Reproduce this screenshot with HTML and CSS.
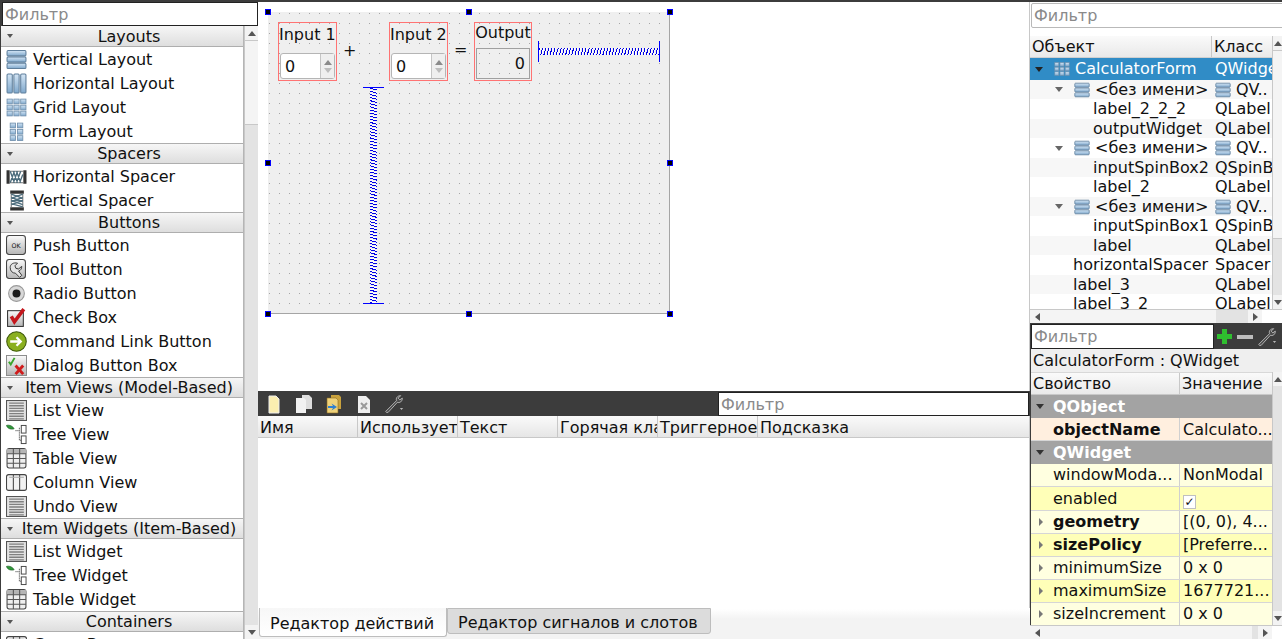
FILE: index.html
```html
<!DOCTYPE html>
<html lang="ru">
<head>
<meta charset="utf-8">
<title>Qt Designer</title>
<link rel="stylesheet" href="styles.css">
</head>
<body>
<svg class="defs" width="0" height="0">
  <defs>
    <linearGradient id="bl" x1="0" y1="0" x2="0" y2="1"><stop offset="0" stop-color="#d5e6f5"/><stop offset="1" stop-color="#7fa8cc"/></linearGradient>
    <linearGradient id="gr" x1="0" y1="0" x2="0" y2="1"><stop offset="0" stop-color="#fafafa"/><stop offset="1" stop-color="#b5b5b5"/></linearGradient>
    <symbol id="i-v" viewBox="0 0 20 20"><g fill="url(#bl)" stroke="#5f7f9c"><rect x="1" y="1.500" width="18" height="5" rx="1"/><rect x="1" y="7.500" width="18" height="5" rx="1"/><rect x="1" y="13.500" width="18" height="5" rx="1"/></g></symbol>
    <symbol id="i-h" viewBox="0 0 20 20"><g fill="url(#bl)" stroke="#5f7f9c"><rect x="1" y="1" width="5" height="18" rx="1"/><rect x="7.500" y="1" width="5" height="18" rx="1"/><rect x="14" y="1" width="5" height="18" rx="1"/></g></symbol>
    <symbol id="i-g" viewBox="0 0 20 20"><g fill="url(#bl)" stroke="#6f8fac" stroke-width=".8"><rect x="1" y="2" width="5" height="4.500"/><rect x="7.500" y="2" width="5" height="4.500"/><rect x="14" y="2" width="5" height="4.500"/><rect x="1" y="7.800" width="5" height="4.500"/><rect x="7.500" y="7.800" width="5" height="4.500"/><rect x="14" y="7.800" width="5" height="4.500"/><rect x="1" y="13.500" width="5" height="4.500"/><rect x="7.500" y="13.500" width="5" height="4.500"/><rect x="14" y="13.500" width="5" height="4.500"/></g></symbol>
    <symbol id="i-f" viewBox="0 0 20 20"><g fill="url(#bl)" stroke="#6f8fac" stroke-width=".8"><rect x="4" y="2" width="5" height="4.500"/><rect x="11" y="2" width="5" height="4.500"/><rect x="4" y="8" width="5" height="4.500"/><rect x="11" y="8" width="5" height="4.500"/><rect x="4" y="14" width="5" height="4.500"/><rect x="11" y="14" width="5" height="4.500"/></g></symbol>
    <symbol id="i-hs" viewBox="0 0 20 20"><path d="M0.500 4h3v13h-3zM16.500 4h3v13h-3z" fill="#333"/><path d="M3.500 5h13M3.500 16h13" stroke="#777"/><path d="M4 16L8 5M7 16l4-11M10 16l4-11M13 16l3-8M4 5l4 11M7 5l4 11M10 5l4 11" stroke="#4d6d7d" stroke-width="1.300" fill="none"/></symbol>
    <symbol id="i-vs" viewBox="0 0 20 20"><path d="M4 0.500h13v3H4zM4 16.500h13v3H4z" fill="#333"/><path d="M5 3.500v13M16 3.500v13" stroke="#777"/><path d="M5 4l11 4M5 7l11 4M5 10l11 4M5 13l11 3M16 4L5 8M16 7L5 11M16 10L5 14" stroke="#4d6d7d" stroke-width="1.300" fill="none"/></symbol>
    <symbol id="i-ok" viewBox="0 0 20 20"><rect x="0.500" y="0.500" width="18" height="18" rx="2.500" fill="url(#gr)" stroke="#444"/><text x="9.500" y="12.500" class="oktext" text-anchor="middle">OK</text></symbol>
    <symbol id="i-tb" viewBox="0 0 20 20"><rect x="0.500" y="0.500" width="18" height="18" rx="2.500" fill="url(#gr)" stroke="#444"/><path d="M4 8c0-3 3-5 7-4L8.500 6.500l1 2.500 2.500.5L15 7c0 2-1 4-3 4.500l3 4-2 2-4-4c-3 0-5-2-5-5.500z" fill="#e4e4e4" stroke="#333" stroke-width=".9"/></symbol>
    <symbol id="i-r" viewBox="0 0 20 20"><circle cx="10" cy="10" r="7.500" fill="#d8d8d8" stroke="#999"/><circle cx="10" cy="10" r="3.800" fill="#1c1c1c"/></symbol>
    <symbol id="i-c" viewBox="0 0 20 20"><rect x="1.500" y="3.500" width="15" height="15" fill="url(#gr)" stroke="#333"/><path d="M5 9l3 5 9-12" fill="none" stroke="#c4161c" stroke-width="3.400"/></symbol>
    <symbol id="i-cl" viewBox="0 0 20 20"><circle cx="10" cy="10" r="9.300" fill="#8aaf1f" stroke="#3f5a0c"/><path d="M4 10h10M10 6l4 4-4 4" fill="none" stroke="#fff" stroke-width="2.200"/></symbol>
    <symbol id="i-d" viewBox="0 0 22 22"><rect x="0.500" y="0.500" width="21" height="21" fill="url(#gr)" stroke="#888"/><path d="M3 7l2 3 4-7" fill="none" stroke="#3aa52c" stroke-width="2"/><path d="M10 11l8 9M18 11l-8 9" stroke="#d01c1c" stroke-width="3"/></symbol>
    <symbol id="i-l" viewBox="0 0 20 20"><rect x="0.500" y="0.500" width="19" height="19" fill="#e2e2e2" stroke="#555"/><path d="M3 3h14M3 5.500h14M3 8h14M3 10.500h14M3 13h14M3 15.500h14M3 18h14" stroke="#808080" stroke-width="1.300"/></symbol>
    <symbol id="i-t" viewBox="0 0 22 20"><path d="M0.500 0.500c3-1 7 1 8 3.500-3 1-7 0-8-3.500z" fill="#2f9a3a" stroke="#1d5c22" stroke-width=".7"/><path d="M10 6h4M14 3v13h2" fill="none" stroke="#222" stroke-dasharray="1 1"/><rect x="16" y="0.500" width="5" height="8" fill="#fff" stroke="#444"/><rect x="16" y="11.500" width="5" height="8" fill="#fff" stroke="#444"/></symbol>
    <symbol id="i-tt" viewBox="0 0 20 20"><rect x="1" y="0.500" width="18" height="18.500" rx="2" fill="#efefef" stroke="#444"/><rect x="1" y="1" width="18" height="4.500" fill="#b5b5b5"/><path d="M1 5.500h18M1 10h18M1 14.500h18M7 1v18M13 1v18" stroke="#555"/></symbol>
    <symbol id="i-cv" viewBox="0 0 20 20"><rect x="0.500" y="2.500" width="19" height="15" rx="2" fill="#f2f2f2" stroke="#444"/><path d="M7 2.500v15M13 2.500v15" stroke="#444"/><path d="M3 5h14" stroke="#aaa"/></symbol>
    <symbol id="i-w" viewBox="0 0 24 24"><path d="M3 22l-1-1L15 8c-1-3 1-6 5-6l-3 3 2 2 3-2c0 4-3 6-6 5L5 22z" fill="#4a4a4a" stroke="#c9c9c9" stroke-width="1"/><path d="M19 17h4l-2 2z" fill="#ddd"/></symbol>
  </defs>
</svg>

<div class="app">
  <aside class="box">
    <div class="boxfilter">Фильтр</div>
    <div class="boxbody">
      <div class="boxlist">
        <div class="cat"><i class="tri"></i><span>Layouts</span></div>
        <div class="item"><svg class="ico"><use href="#i-v"/></svg>Vertical Layout</div>
        <div class="item"><svg class="ico"><use href="#i-h"/></svg>Horizontal Layout</div>
        <div class="item"><svg class="ico"><use href="#i-g"/></svg>Grid Layout</div>
        <div class="item"><svg class="ico"><use href="#i-f"/></svg>Form Layout</div>
        <div class="cat"><i class="tri"></i><span>Spacers</span></div>
        <div class="item"><svg class="ico"><use href="#i-hs"/></svg>Horizontal Spacer</div>
        <div class="item"><svg class="ico"><use href="#i-vs"/></svg>Vertical Spacer</div>
        <div class="cat"><i class="tri"></i><span>Buttons</span></div>
        <div class="item"><svg class="ico"><use href="#i-ok"/></svg>Push Button</div>
        <div class="item"><svg class="ico"><use href="#i-tb"/></svg>Tool Button</div>
        <div class="item"><svg class="ico"><use href="#i-r"/></svg>Radio Button</div>
        <div class="item"><svg class="ico"><use href="#i-c"/></svg>Check Box</div>
        <div class="item"><svg class="ico"><use href="#i-cl"/></svg>Command Link Button</div>
        <div class="item"><svg class="ico"><use href="#i-d"/></svg>Dialog Button Box</div>
        <div class="cat"><i class="tri"></i><span>Item Views (Model-Based)</span></div>
        <div class="item"><svg class="ico"><use href="#i-l"/></svg>List View</div>
        <div class="item"><svg class="ico"><use href="#i-t"/></svg>Tree View</div>
        <div class="item"><svg class="ico"><use href="#i-tt"/></svg>Table View</div>
        <div class="item"><svg class="ico"><use href="#i-cv"/></svg>Column View</div>
        <div class="item"><svg class="ico"><use href="#i-l"/></svg>Undo View</div>
        <div class="cat"><i class="tri"></i><span>Item Widgets (Item-Based)</span></div>
        <div class="item"><svg class="ico"><use href="#i-l"/></svg>List Widget</div>
        <div class="item"><svg class="ico"><use href="#i-t"/></svg>Tree Widget</div>
        <div class="item"><svg class="ico"><use href="#i-tt"/></svg>Table Widget</div>
        <div class="cat"><i class="tri"></i><span>Containers</span></div>
        <div class="item"><svg class="ico"><use href="#i-cv"/></svg>Group Box</div>
      </div>
      <div class="vbar wide">
        <div class="btn"><i class="up"></i></div>
        <div class="thumb left-thumb"></div>
        <div class="track"></div>
        <div class="btn"><i class="down"></i></div>
      </div>
    </div>
  </aside>

  <main class="center">
    <section class="canvas">
      <div class="form">
        <svg class="dots" width="402" height="302">
          <defs><pattern id="dot" x="1" y="1" width="10" height="10" patternUnits="userSpaceOnUse"><rect x="0" y="0" width="1" height="1" fill="#a6a6a6"/></pattern></defs>
          <rect width="402" height="302" fill="url(#dot)"/>
        </svg>
        <div class="wgt w1"><div class="lbl">Input 1</div><div class="spin"><span class="val">0</span><span class="arrows"><i class="sup"></i><i class="sdn"></i></span></div></div>
        <div class="sign plus">+</div>
        <div class="wgt w2"><div class="lbl">Input 2</div><div class="spin"><span class="val">0</span><span class="arrows"><i class="sup"></i><i class="sdn"></i></span></div></div>
        <div class="sign eq">=</div>
        <div class="wgt w3"><div class="lbl top">Output</div><div class="lcd">0</div></div>
        <div class="hspring"></div>
        <div class="vspring"></div>
      </div>
      <i class="h h1"></i><i class="h h2"></i><i class="h h3"></i><i class="h h4"></i><i class="h h5"></i><i class="h h6"></i><i class="h h7"></i><i class="h h8"></i>
    </section>

    <div class="acttool">
      <div class="acticons">
        <svg class="ai" viewBox="0 0 20 20"><path d="M5 2h7l3 3v14H5z" fill="#fbeeb0" stroke="#eee"/></svg>
        <svg class="ai" viewBox="0 0 20 20"><path d="M8 1h7l3 3v11H8z" fill="#ddd"/><path d="M2 4h8l2 2v13H2z" fill="#f1f1f1"/></svg>
        <svg class="ai" viewBox="0 0 20 20"><path d="M7 1h8l2 2v12H7z" fill="#c9a23d"/><path d="M3 4h9l2 2v13H3z" fill="#efd27a" stroke="#8a6a20" stroke-width=".6"/><path d="M4 12h5l-1.500-2.500L13 13l-5.500 3.500L9 14H4z" fill="#2f7fd0"/></svg>
        <svg class="ai" viewBox="0 0 20 20"><path d="M4 2h8l4 4v13H4z" fill="#eee"/><path d="M7 9l6 6M13 9l-6 6" stroke="#999" stroke-width="2"/></svg>
        <svg class="ai" viewBox="0 0 24 24"><use href="#i-w"/></svg>
      </div>
      <div class="actfilter">Фильтр</div>
    </div>
    <div class="acthead">
      <div class="hc">Имя</div><div class="hc">Использует</div><div class="hc">Текст</div><div class="hc">Горячая клавиша</div><div class="hc">Триггерное</div><div class="hc last">Подсказка</div>
    </div>
    <div class="actbody"></div>
    <div class="tabs">
      <div class="tab on">Редактор действий</div>
      <div class="tab">Редактор сигналов и слотов</div>
    </div>
  </main>

  <aside class="right">
    <div class="inspector">
      <div class="insfilter"><div class="insfield">Фильтр</div></div>
      <div class="tblwrap">
        <div class="tbl">
          <div class="thead"><div class="tc1">Объект</div><div class="tc2">Класс</div></div>
          <div class="r sel"><span class="n1"><i class="exp white"></i><svg class="mini"><use href="#i-g"/></svg>CalculatorForm</span><span class="c2">QWidget</span></div>
          <div class="r"><span class="n2"><i class="exp"></i><svg class="mini"><use href="#i-v"/></svg>&lt;без имени&gt;</span><span class="c2"><svg class="mini sm"><use href="#i-v"/></svg>QV..</span></div>
          <div class="r"><span class="n3">label_2_2_2</span><span class="c2">QLabel</span></div>
          <div class="r"><span class="n3">outputWidget</span><span class="c2">QLabel</span></div>
          <div class="r"><span class="n2"><i class="exp"></i><svg class="mini"><use href="#i-v"/></svg>&lt;без имени&gt;</span><span class="c2"><svg class="mini sm"><use href="#i-v"/></svg>QV..</span></div>
          <div class="r"><span class="n3">inputSpinBox2</span><span class="c2">QSpinBox</span></div>
          <div class="r"><span class="n3">label_2</span><span class="c2">QLabel</span></div>
          <div class="r"><span class="n2"><i class="exp"></i><svg class="mini"><use href="#i-v"/></svg>&lt;без имени&gt;</span><span class="c2"><svg class="mini sm"><use href="#i-v"/></svg>QV..</span></div>
          <div class="r"><span class="n3">inputSpinBox1</span><span class="c2">QSpinBox</span></div>
          <div class="r"><span class="n3">label</span><span class="c2">QLabel</span></div>
          <div class="r"><span class="n4">horizontalSpacer</span><span class="c2">Spacer</span></div>
          <div class="r"><span class="n4">label_3</span><span class="c2">QLabel</span></div>
          <div class="r"><span class="n4">label_3_2</span><span class="c2">QLabel</span></div>
        </div>
        <div class="vbar">
          <div class="btn"><i class="up"></i></div>
          <div class="thumb ins-thumb"></div>
          <div class="track"></div>
          <div class="btn"><i class="down"></i></div>
        </div>
      </div>
      <div class="hbar">
        <div class="hbtn"><i class="lf"></i></div><div class="htrack a"></div><div class="hthumb b"></div><div class="hbtn"><i class="rt"></i></div><div class="htrack c"></div>
      </div>
    </div>

    <div class="ptool">
      <div class="pfilter">Фильтр</div>
      <div class="picons">
        <svg class="pi" viewBox="0 0 20 20"><path d="M7 2h5v5h5v5h-5v5H7v-5H2V7h5z" fill="#2fbf2f"/></svg>
        <svg class="pi" viewBox="0 0 20 20"><path d="M1 8h16v4H1z" fill="#bdbdbd"/></svg>
        <svg class="pi" viewBox="0 0 24 24"><use href="#i-w"/></svg>
      </div>
    </div>
    <div class="ptitle">CalculatorForm : QWidget</div>
    <div class="ptblwrap">
      <div class="ptbl">
        <div class="phead"><div class="pc1">Свойство</div><div class="pc2">Значение</div></div>
        <div class="pgroup"><i class="exp white dk"></i>QObject</div>
        <div class="p orange"><div class="pn bold">objectName</div><div class="pv">Calculato...</div></div>
        <div class="pgroup"><i class="exp white dk"></i>QWidget</div>
        <div class="p l"><div class="pn">windowModa...</div><div class="pv">NonModal</div></div>
        <div class="p y tall"><div class="pn">enabled</div><div class="pv"><span class="chk">✓</span></div></div>
        <div class="p l"><div class="pn bold"><i class="rarr"></i>geometry</div><div class="pv">[(0, 0), 4...</div></div>
        <div class="p y"><div class="pn bold"><i class="rarr"></i>sizePolicy</div><div class="pv">[Preferre...</div></div>
        <div class="p l"><div class="pn"><i class="rarr"></i>minimumSize</div><div class="pv">0 x 0</div></div>
        <div class="p y"><div class="pn"><i class="rarr"></i>maximumSize</div><div class="pv">1677721...</div></div>
        <div class="p l"><div class="pn"><i class="rarr"></i>sizeIncrement</div><div class="pv">0 x 0</div></div>
      </div>
      <div class="vbar">
        <div class="btn"><i class="up"></i></div>
        <div class="track"></div>
        <div class="btn"><i class="down"></i></div>
      </div>
    </div>
    <div class="hbar">
      <div class="hbtn"><i class="lf"></i></div><div class="htrack full"></div><div class="hthumb tiny"></div><div class="hbtn"><i class="rt"></i></div><div class="htrack c"></div>
    </div>
  </aside>
</div>
</body>
</html>
```
FILE: styles.css
```css
* { box-sizing: border-box; }
html, body { margin: 0; padding: 0; height: 639px; overflow: hidden; }
body { background: #3c3c3c; font: 16px/20px "DejaVu Sans", sans-serif; color: #111; }
.defs { position: absolute; }
.oktext { font: 6px "DejaVu Sans", sans-serif; fill: #111; }
.app { display: grid; grid-template-columns: 258px 772px 252px; height: 637px; margin-top: 2px; }

/* Widget box */
.box { display: flex; flex-direction: column; padding-left: 1px; background: #3c3c3c; overflow: hidden; min-height: 0; }
.boxfilter { height: 24px; margin-left: 1px; background: #fff; border: 1px solid #222; color: #8a8a8a; padding-left: 2px; line-height: 23px; flex: none; }
.boxbody { display: flex; flex: 1; min-height: 0; background: #fff; }
.boxlist { flex: 1; min-width: 0; overflow: hidden; border-right: 1px solid #b5b5b5; }
.cat { height: 21px; display: flex; align-items: center; position: relative; background: linear-gradient(#f6f6f6, #dedede); border-top: 1px solid #aeaeae; border-bottom: 1px solid #aeaeae; justify-content: center; padding: 1px 0 0 14px; }
.boxlist > .cat:first-child { border-top: 0; }
.cat span { white-space: nowrap; }
.tri { position: absolute; left: 6px; top: 8px; width: 0; height: 0; border: 3.500px solid transparent; border-top: 4px solid #555; border-bottom: 0; }
.item { height: 24px; display: flex; align-items: center; white-space: nowrap; padding: 2px 0 0 5px; background: #fff; }
.ico { width: 21px; height: 21px; margin: -2px 6px 0 0; flex: none; }

/* Scrollbars */
.vbar { width: 10px; flex: none; display: flex; flex-direction: column; background: #e3e3e3; border-left: 1px solid #c8c8c8; }
.vbar.wide { width: 14px; }
.btn { height: 14px; flex: none; display: flex; align-items: center; justify-content: center; background: #f3f3f3; }
.up, .down { width: 0; height: 0; border: 4px solid transparent; }
.up { border-bottom: 5px solid #555; border-top: 0; }
.down { border-top: 5px solid #555; border-bottom: 0; }
.thumb { flex: none; background: #f4f4f4; border-top: 1px solid #c8c8c8; border-bottom: 1px solid #c8c8c8; }
.left-thumb { height: 85px; }
.ins-thumb { height: 189px; }
.track { flex: 1; background: #e3e3e3; }
.hbar { height: 14px; display: flex; background: #f4f4f4; border-top: 1px solid #c8c8c8; flex: none; }
.hbtn { width: 14px; display: flex; align-items: center; justify-content: center; flex: none; }
.lf, .rt { width: 0; height: 0; border: 4px solid transparent; }
.lf { border-right: 5px solid #555; border-left: 0; }
.rt { border-left: 5px solid #555; border-right: 0; }
.htrack.a { width: 172px; background: #f4f4f4; }
.hthumb.b { width: 32px; background: #e3e3e3; }
.htrack.c { flex: 1; background: #fff; }
.htrack.full { width: 208px; background: #f4f4f4; }
.hthumb.tiny { width: 6px; background: #e3e3e3; }

/* Centre */
.center { display: flex; flex-direction: column; min-width: 0; background: #fff; }
.canvas { height: 389px; flex: none; position: relative; background: #fff; border-right: 1px solid #c8c8c8; }
.form { position: absolute; left: 10px; top: 10px; width: 402px; height: 302px; background: #efefef; border-right: 1px solid #a5a5a5; border-bottom: 1px solid #a5a5a5; }
.dots { position: absolute; left: 0; top: 0; }
.wgt { position: absolute; top: 10px; height: 59px; border: 1px solid #ff7373; }
.w1 { left: 10px; width: 59px; }
.w2 { left: 121px; width: 59px; }
.w3 { left: 206px; width: 58px; }
.lbl { text-align: center; height: 30px; line-height: 24px; white-space: nowrap; padding-right: 1px; }
.lbl.top { line-height: 20px; height: 25px; padding-right: 0; }
.spin { position: relative; height: 26px; margin: 0 1px; background: #fff; border: 1px solid #b5b5b5; border-radius: 3px; display: flex; }
.val { flex: 1; padding-left: 4px; line-height: 25px; }
.arrows { width: 14px; background: #efefef; border-left: 1px solid #c5c5c5; display: flex; flex-direction: column; align-items: center; justify-content: center; gap: 3px; }
.sup, .sdn { width: 0; height: 0; border: 4px solid transparent; }
.sup { border-bottom: 5px solid #8a8a8a; border-top: 0; }
.sdn { border-top: 5px solid #bdbdbd; border-bottom: 0; }
.lcd { height: 31px; margin: 0 1px; border: 1px solid #a0a0a0; text-align: right; padding-right: 4px; line-height: 30px; }
.sign { position: absolute; line-height: 20px; }
.plus { left: 75px; top: 29px; }
.eq { left: 186px; top: 28px; }
.hspring { position: absolute; left: 270px; top: 29px; width: 122px; height: 21px; border-left: 1px solid #00f; border-right: 1px solid #00f; background: repeating-linear-gradient(105deg, #0000e6 0 1px, #fff 1px 2px, #efefef 2px 3px) center / 100% 7px no-repeat; }
.vspring { position: absolute; left: 95px; top: 75px; width: 21px; height: 217px; border-top: 1px solid #00f; border-bottom: 1px solid #00f; background: repeating-linear-gradient(15deg, #0000e6 0 1px, #fff 1px 2px, #efefef 2px 3px) center / 7px 100% no-repeat; }
.h { position: absolute; width: 6px; height: 6px; background: #000; border: 1px solid #00f; }
.h1 { left: 7px; top: 7px; }
.h2 { left: 208px; top: 7px; }
.h3 { left: 409px; top: 7px; }
.h4 { left: 7px; top: 158px; }
.h5 { left: 409px; top: 158px; }
.h6 { left: 7px; top: 309px; }
.h7 { left: 208px; top: 309px; }
.h8 { left: 409px; top: 309px; }

.acttool { height: 25px; flex: none; display: flex; background: #3c3c3c; justify-content: space-between; }
.acticons { display: flex; align-items: center; padding-left: 6px; gap: 10px; }
.ai { width: 20px; height: 20px; }
.actfilter { width: 311px; margin: 1px 1px 0 0; background: #fff; border: 1px solid #222; color: #8a8a8a; padding-left: 2px; line-height: 24px; }
.acthead { height: 22px; flex: none; display: flex; background: linear-gradient(#fafafa, #e6e6e6); border-bottom: 1px solid #c8c8c8; border-right: 1px solid #c8c8c8; }
.hc { width: 100px; padding-left: 2px; border-right: 1px solid #c8c8c8; white-space: nowrap; overflow: hidden; line-height: 23px; }
.hc.last { flex: 1; border-right: 0; }
.actbody { flex: 1; background: #fff; border-right: 1px solid #c8c8c8; }
.tabs { height: 31px; flex: none; display: flex; align-items: flex-start; padding-left: 1px; background: linear-gradient(#fff 0 1px, #f3f3f3 11px); }
.tab { height: 26px; padding: 0 12px 0 10px; background: #dcdcdc; border: 1px solid #bdbdbd; border-bottom-left-radius: 3px; border-bottom-right-radius: 3px; line-height: 27px; white-space: nowrap; }
.tab.on { width: 188px; height: 29px; background: linear-gradient(#f7f7f7, #fff); border-top: 0; line-height: 31px; }

/* Right */
.right { display: flex; flex-direction: column; min-width: 0; background: #3c3c3c; overflow: hidden; }
.inspector { height: 321px; flex: none; display: flex; flex-direction: column; background: #fff; }
.insfilter { height: 34px; flex: none; padding: 1px 0 0 1px; background: #fff; }
.insfield { height: 25px; border: 1px solid #b9b9b9; border-radius: 2px; color: #8a8a8a; padding-left: 2px; line-height: 24px; margin-right: -2px; }
.tblwrap { flex: 1; min-height: 0; display: flex; overflow: hidden; }
.tbl { flex: 1; min-width: 0; overflow: hidden; }
.thead { display: flex; height: 22px; background: linear-gradient(#fafafa, #e9e9e9); border-bottom: 1px solid #d0d0d0; }
.tc1 { width: 182px; padding-left: 2px; line-height: 22px; border-right: 1px solid #c8c8c8; }
.tc2 { flex: 1; padding-left: 2px; line-height: 22px; }
.r { height: 19.500px; display: flex; align-items: center; white-space: nowrap; background: #fff; }
.r:nth-child(odd) { background: #f7f7f7; }
.r.sel { background: #308cc6; color: #fff; height: 21.500px; }
.r span { display: flex; align-items: center; overflow: hidden; height: 100%; padding-top: 1px; }
.n1 { width: 182px; padding-left: 5px; flex: none; }
.n2 { width: 182px; padding-left: 25px; flex: none; }
.n3 { width: 182px; padding-left: 63px; flex: none; }
.n4 { width: 182px; padding-left: 43px; flex: none; }
.c2 { flex: 1; padding-left: 3px; min-width: 0; }
.exp { width: 0; height: 0; border: 4px solid transparent; border-top: 5px solid #666; border-bottom: 0; margin-right: 11px; flex: none; }
.exp.white { border-top-color: #222; }
.exp.dk { border-top-color: #333; margin-right: 9px; }
.mini { width: 16px; height: 16px; margin-right: 5px; flex: none; }
.mini.sm { margin-right: 5px; }
.ptool { height: 25px; flex: none; display: flex; margin-top: 1px; margin-left: 1px; }
.pfilter { width: 183px; background: #fff; border: 1px solid #222; color: #8a8a8a; padding-left: 2px; line-height: 23px; }
.picons { display: flex; align-items: center; padding-left: 1px; gap: 1px; }
.pi { width: 20px; height: 20px; flex: none; }
.ptitle { height: 23px; flex: none; background: #efefef; padding-left: 2px; line-height: 23px; margin-left: 1px; }
.ptblwrap { flex: 1; min-height: 0; display: flex; background: #fff; margin-left: 1px; }
.ptbl { flex: 1; min-width: 0; }
.phead { display: flex; height: 23px; background: linear-gradient(#fafafa, #e9e9e9); border-top: 1px solid #d8d8d8; border-bottom: 1px solid #c8c8c8; }
.pc1 { width: 149px; padding-left: 2px; line-height: 22px; border-right: 1px solid #c8c8c8; }
.pc2 { flex: 1; padding-left: 2px; line-height: 22px; }
.pgroup { height: 23px; background: #a3a3a3; color: #fff; font-weight: bold; display: flex; align-items: center; padding-left: 5px; }
.p { height: 23px; display: flex; white-space: nowrap; border-bottom: 1px solid #d6d6d6; }
.p.orange { background: #ffefdf; line-height: 24px; }
.p.l { background: #ffffe0; }
.p.y { background: #ffffb8; }
.p.tall { height: 24px; }
.pn { width: 149px; padding-left: 22px; position: relative; line-height: 22px; border-right: 1px solid #d0d0d0; overflow: hidden; flex: none; }
.pv { flex: 1; min-width: 0; padding-left: 3px; line-height: 22px; overflow: hidden; }
.orange .pn, .orange .pv, .tall .pn, .tall .pv { line-height: 24px; }
.bold { font-weight: bold; }
.rarr { position: absolute; left: 8px; top: 7px; width: 0; height: 0; border: 4px solid transparent; border-left: 4px solid #777; border-right: 0; }
.chk { display: inline-flex; width: 13px; height: 14px; background: #fff; border: 1px solid #c0c0c0; align-items: center; justify-content: center; font-size: 12px; font-weight: bold; vertical-align: -2px; }
```
